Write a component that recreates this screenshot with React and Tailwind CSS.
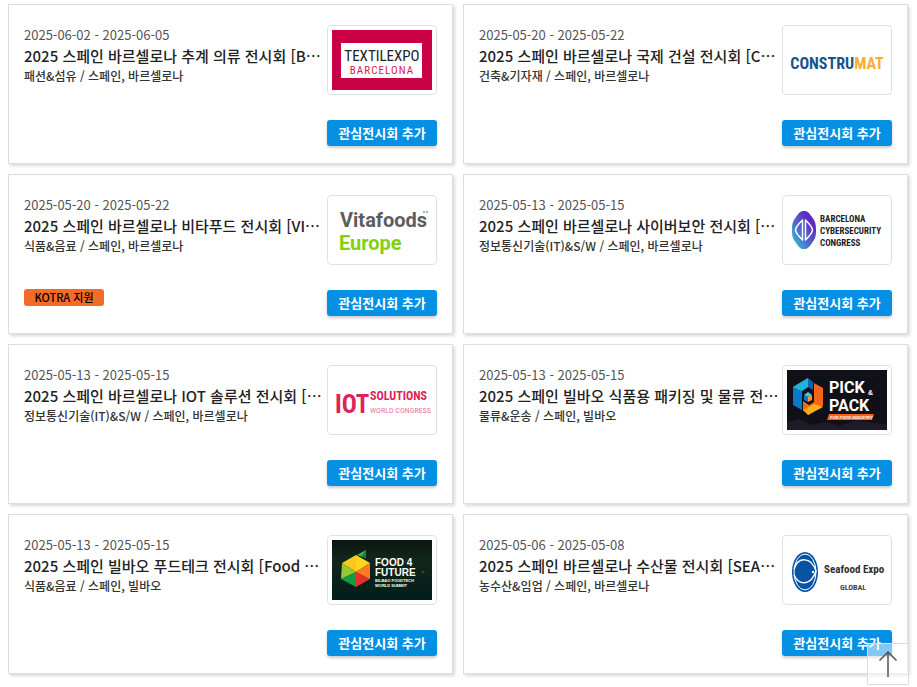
const NARROW = "font-['Liberation_Sans_Narrow','Roboto_Condensed','Liberation_Sans',sans-serif]";

function TextilExpoLogo() {
  return (
    <svg viewBox="0 0 100 60" className={`w-full h-full ${NARROW}`} role="img" aria-label="Textilexpo Barcelona">
      <rect width="100" height="60" fill="#c90044" />
      <rect x="9" y="13" width="81" height="35" fill="#fff" />
      <text x="50" y="31" textAnchor="middle" fontSize="15" fill="#222">TEXTILEXPO</text>
      <text x="50" y="44" textAnchor="middle" fontSize="11" fill="#d81b50" className="tracking-widest">BARCELONA</text>
    </svg>
  );
}

function ConstrumatLogo() {
  return (
    <svg viewBox="0 0 100 60" className={`w-full h-full font-bold ${NARROW}`} role="img" aria-label="Construmat">
      <text x="50" y="39" textAnchor="middle" fontSize="16" fill="#17558f">
        CONSTRU<tspan fill="#f6ae35">MAT</tspan>
      </text>
    </svg>
  );
}

function VitafoodsLogo() {
  return (
    <svg viewBox="0 0 100 60" className="w-full h-full font-bold font-['Roboto',sans-serif]" role="img" aria-label="Vitafoods Europe">
      <text x="8" y="27" fontSize="20" fill="#5d5d60">Vitafoods</text>
      <text x="7" y="50" fontSize="20" fill="#83d00f">Europe</text>
      <path d="M91 12h2M94 12h2" stroke="#5d5d60" />
    </svg>
  );
}

function CyberLogo() {
  return (
    <svg viewBox="0 0 100 60" className={`w-full h-full font-bold ${NARROW}`} role="img" aria-label="Barcelona Cybersecurity Congress">
      <defs>
        <linearGradient id="cyber" x1="1" y1="0" x2="0" y2="1">
          <stop offset="0.25" stopColor="#6029c4" />
          <stop offset="0.6" stopColor="#4f6dcc" />
          <stop offset="1" stopColor="#35d4d2" />
        </linearGradient>
      </defs>
      <path d="M17 11c4 0 5 2 8 6 3 4 4 6 4 13s-1 9-4 13c-3 4-4 6-8 6s-5-2-8-6c-3-4-4-6-4-13s1-9 4-13c3-4 4-6 8-6z" fill="url(#cyber)" />
      <path d="M15.500 20c-4 4-7 7-7 10s3 6 7 10zM18.500 20c4 4 7 7 7 10s-3 6-7 10z" fill="none" stroke="#fff" strokeWidth="1.5" strokeLinejoin="round" />
      <g fontSize="9" fill="#222">
        <text x="33" y="22">BARCELONA</text>
        <text x="33" y="34">CYBERSECURITY</text>
        <text x="33" y="46">CONGRESS</text>
      </g>
    </svg>
  );
}

function IotLogo() {
  return (
    <svg viewBox="0 0 100 60" className={`w-full h-full ${NARROW}`} role="img" aria-label="IOT Solutions World Congress">
      <text x="3" y="43" fontSize="25" className="font-bold" fill="#dc235a">IOT</text>
      <text x="38" y="30" fontSize="12" className="font-bold" fill="#dc235a">SOLUTIONS</text>
      <text x="38" y="43" fontSize="8" fill="#e8769a">WORLD CONGRESS</text>
    </svg>
  );
}

function PickPackLogo() {
  return (
    <svg viewBox="0 0 100 60" className="w-full h-full" role="img" aria-label="Pick & Pack for Food Industry">
      <rect width="100" height="60" fill="#101019" />
      <path d="M0 52l12-3 12 6 14-3 14 4 18-6 30 5v5H0z" fill="#1d1b28" />
      <path d="M6 17l15-9v9l-6 4v19l-9-5z" fill="#0878c8" />
      <path d="M6 17l15-9v9l-6 4z" fill="#20b5d8" />
      <path d="M21 8l5 4v8l-5-3z" fill="#0868ad" />
      <path d="M27 13l9 5v18l-15 9v-9l6-4z" fill="#f7631b" />
      <path d="M16 31l6 4v9l-6-4z" fill="#f7631b" />
      <path d="M16 40l11-6 9 3-15 8z" fill="#ffae16" />
      <path d="M17 25l4-3 4 3-4 2z" fill="#4cc7d9" />
      <path d="M17 25l4 2v5l-4-2z" fill="#1276c0" />
      <path d="M25 25l-4 2v5l4-2z" fill="#ff971c" />
      <g className="font-bold font-['Roboto',sans-serif]" fontSize="16" fill="#fff">
        <text x="42" y="23">PICK</text>
        <text x="42" y="41">PACK</text>
      </g>
      <text x="81" y="25" fontSize="7" className="font-bold font-['Liberation_Sans',sans-serif]" fill="#fff">&amp;</text>
      <path d="M42 44h45l-2 6H40z" fill="#f9601c" />
      <text x="43" y="49" fontSize="4" className="italic font-bold font-['Liberation_Sans',sans-serif]" fill="#fff">FOR FOOD INDUSTRY</text>
    </svg>
  );
}

function FoodFutureLogo() {
  return (
    <svg viewBox="0 0 100 60" className="w-full h-full font-bold font-['Liberation_Sans',sans-serif]" role="img" aria-label="Food 4 Future Bilbao Foodtech World Summit">
      <defs>
        <linearGradient id="night" x1="0" y1="0" x2="0" y2="1">
          <stop stopColor="#0b1512" />
          <stop offset="0.3" stopColor="#12261a" />
          <stop offset="1" stopColor="#021d1b" />
        </linearGradient>
      </defs>
      <rect width="100" height="60" fill="url(#night)" />
      <path d="M24 32V15l14 8z" fill="#ffd51c" />
      <path d="M24 32V15L10 23z" fill="#fbc91b" />
      <path d="M24 32L10 23 9 39z" fill="#96c832" />
      <path d="M24 32L9 39l15 8z" fill="#169b43" />
      <path d="M24 32v15l14-8z" fill="#e5312a" />
      <path d="M24 32l14-9v16z" fill="#ff7b22" />
      <path d="M25 15l9-5v8z" fill="#55b947" />
      <path d="M34 10v8l-5-2z" fill="#078843" />
      <g fill="#fff">
        <text x="43" y="26" fontSize="10">FOOD 4</text>
        <text x="43" y="36" fontSize="10">FUTURE</text>
        <text x="43" y="42" fontSize="4">BILBAO FOODTECH</text>
        <text x="43" y="47" fontSize="4">WORLD SUMMIT</text>
      </g>
      <circle cx="91" cy="32" r="1.500" fill="#35443d" />
    </svg>
  );
}

function SeafoodLogo() {
  return (
    <svg viewBox="0 0 100 60" className={`w-full h-full ${NARROW}`} role="img" aria-label="Seafood Expo Global">
      <ellipse cx="18" cy="32" rx="13" ry="20" fill="#0753a4" />
      <ellipse cx="18" cy="32" rx="11" ry="18" fill="none" stroke="#fff" />
      <path d="M7 29c4-12 17-13 22 2-5 15-17 15-22 4" fill="none" stroke="#fff" strokeWidth="1.500" />
      <circle cx="26" cy="32" r="1.200" fill="#fff" />
      <text x="37" y="33" fontSize="11" className="font-bold" fill="#303030">Seafood Expo</text>
      <text x="53" y="50" fontSize="8" className="font-bold" fill="#444">GLOBAL</text>
    </svg>
  );
}

const EXHIBITIONS = [
  { date: "2025-06-02 - 2025-06-05", title: "2025 스페인 바르셀로나 추계 의류 전시회 [B…", info: "패션&섬유 / 스페인, 바르셀로나", Logo: TextilExpoLogo },
  { date: "2025-05-20 - 2025-05-22", title: "2025 스페인 바르셀로나 국제 건설 전시회 [C…", info: "건축&기자재 / 스페인, 바르셀로나", Logo: ConstrumatLogo },
  { date: "2025-05-20 - 2025-05-22", title: "2025 스페인 바르셀로나 비타푸드 전시회 [VI…", info: "식품&음료 / 스페인, 바르셀로나", Logo: VitafoodsLogo, kotra: true },
  { date: "2025-05-13 - 2025-05-15", title: "2025 스페인 바르셀로나 사이버보안 전시회 […", info: "정보통신기술(IT)&S/W / 스페인, 바르셀로나", Logo: CyberLogo },
  { date: "2025-05-13 - 2025-05-15", title: "2025 스페인 바르셀로나 IOT 솔루션 전시회 […", info: "정보통신기술(IT)&S/W / 스페인, 바르셀로나", Logo: IotLogo },
  { date: "2025-05-13 - 2025-05-15", title: "2025 스페인 빌바오 식품용 패키징 및 물류 전…", info: "물류&운송 / 스페인, 빌바오", Logo: PickPackLogo },
  { date: "2025-05-13 - 2025-05-15", title: "2025 스페인 빌바오 푸드테크 전시회 [Food …", info: "식품&음료 / 스페인, 빌바오", Logo: FoodFutureLogo },
  { date: "2025-05-06 - 2025-05-08", title: "2025 스페인 바르셀로나 수산물 전시회 [SEA…", info: "농수산&임업 / 스페인, 바르셀로나", Logo: SeafoodLogo },
];

function ExhibitionCard({ item }) {
  const { Logo } = item;
  return (
    <li className="flex h-40 min-w-0 justify-between border border-[#ddd] bg-white px-[15px] pt-5 pb-[17px] shadow-[2px_2px_3px_rgba(0,0,0,0.15)]">
      <div className="flex min-w-0 flex-1 flex-col items-start">
        <p className="text-[13px] leading-5 text-[#555]">{item.date}</p>
        <h2 className="text-[15px] leading-[22px] font-medium whitespace-nowrap text-[#222]">{item.title}</h2>
        <p className="text-[12px] leading-[18px] font-medium text-[#333]">{item.info}</p>
        {item.kotra && (
          <span className="mt-auto mb-[10px] w-20 rounded-[3px] bg-[#f56a24] text-center text-[11px] leading-[17px] font-medium text-black">
            KOTRA 지원
          </span>
        )}
      </div>
      <div className="flex w-[110px] shrink-0 flex-col justify-between">
        <div className="h-[70px] rounded border border-[#dee2e6] bg-white p-1">
          <Logo />
        </div>
        <button type="button" className="h-[26px] rounded-[3px] bg-[#0590e3] text-[13px] font-bold text-white shadow-[0_2px_3px_rgba(0,0,0,0.2)]">
          관심전시회 추가
        </button>
      </div>
    </li>
  );
}

export default function App() {
  return (
    <main lang="ko" className="bg-white pt-1 pr-[9px] pb-3 pl-2 font-['Noto_Sans_CJK_KR',sans-serif]">
      <ul className="grid grid-cols-2 gap-[10px]">
        {EXHIBITIONS.map((item) => (
          <ExhibitionCard key={item.title} item={item} />
        ))}
      </ul>

      {/* Back to top */}
      <button
        type="button"
        aria-label="맨 위로"
        className="fixed right-2 bottom-[2px] flex size-[42px] items-center justify-center border border-[#ddd] bg-white/50"
      >
        <svg viewBox="0 0 42 42" className="size-[42px] shrink-0" fill="none" stroke="#555" strokeWidth="1.500">
          <path d="M21 34V9M12.500 17.500L21 9l8.500 8.500" />
        </svg>
      </button>
    </main>
  );
}
